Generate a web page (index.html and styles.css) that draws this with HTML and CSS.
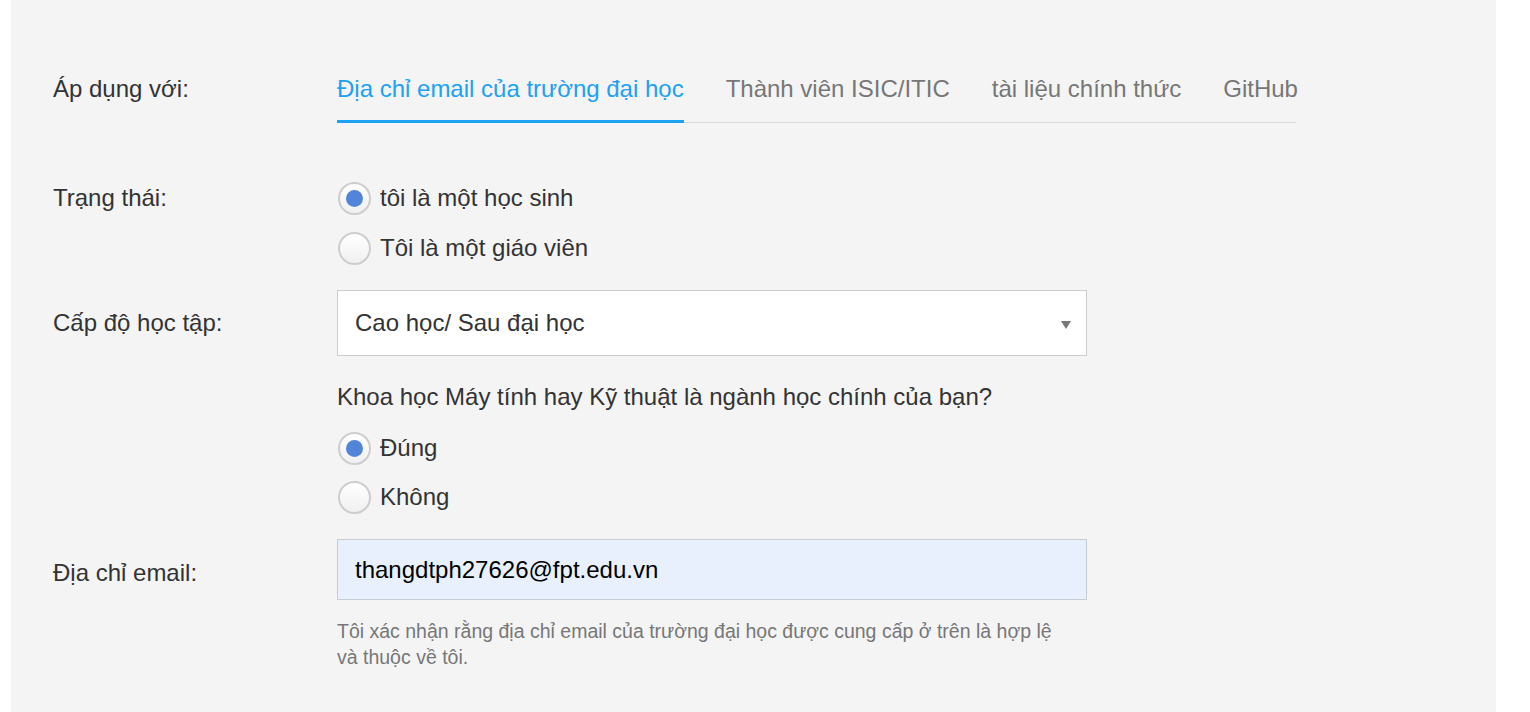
FILE: index.html
```html
<!DOCTYPE html>
<html lang="vi">
<head>
<meta charset="utf-8">
<title>Form</title>
<link rel="stylesheet" href="styles.css">
</head>
<body>
<div class="panel">
  <div class="row row-tabs">
    <div class="label">Áp dụng với:</div>
    <nav class="tabs">
      <span class="tab active">Địa chỉ email của trường đại học</span>
      <span class="tab">Thành viên ISIC/ITIC</span>
      <span class="tab">tài liệu chính thức</span>
      <span class="tab">GitHub</span>
    </nav>
  </div>

  <div class="row row-status">
    <div class="label label-radio">Trạng thái:</div>
    <div class="options">
      <div class="option"><span class="radio checked"></span><span>tôi là một học sinh</span></div>
      <div class="option"><span class="radio"></span><span>Tôi là một giáo viên</span></div>
    </div>
  </div>

  <div class="row row-select">
    <div class="label">Cấp độ học tập:</div>
    <div class="field">
      <div class="select"><span>Cao học/ Sau đại học</span><span class="arrow"></span></div>
    </div>
  </div>

  <div class="row row-question">
    <div class="label"></div>
    <div class="field">
      <div class="question">Khoa học Máy tính hay Kỹ thuật là ngành học chính của bạn?</div>
      <div class="options options-q">
        <div class="option"><span class="radio checked"></span><span>Đúng</span></div>
        <div class="option"><span class="radio"></span><span>Không</span></div>
      </div>
    </div>
  </div>

  <div class="row row-email">
    <div class="label label-email">Địa chỉ email:</div>
    <div class="field">
      <div class="input">thangdtph27626@fpt.edu.vn</div>
      <p class="help">Tôi xác nhận rằng địa chỉ email của trường đại học được cung cấp ở trên là hợp lệ và thuộc về tôi.</p>
    </div>
  </div>
</div>
</body>
</html>
```

FILE: styles.css
```css
* { box-sizing: border-box; }
html, body { margin: 0; padding: 0; background: #ffffff; }
body {
  font-family: "Liberation Sans", Arial, sans-serif;
  font-size: 24px;
  color: #333333;
  overflow: hidden;
}
.panel {
  margin-left: 11px;
  width: 1485px;
  min-height: 712px;
  background: #f4f4f4;
  padding: 75px 0 0 42px;
}
.row { display: flex; }
.label {
  width: 284px;
  flex-shrink: 0;
  line-height: 28px;
  color: #333333;
}
.tabs {
  display: flex;
  gap: 42px;
  width: 959px;
  border-bottom: 1px solid #d9d9d9;
}
.tab {
  line-height: 28px;
  padding-bottom: 17px;
  border-bottom: 3px solid transparent;
  margin-bottom: -1px;
  color: #777777;
  white-space: nowrap;
}
.tab.active {
  color: #1da1f2;
  border-bottom-color: #1da1f2;
}
.row-status { margin-top: 59px; }
.label-radio { line-height: 32px; }
.options { display: flex; flex-direction: column; gap: 18px; }
.options-q { gap: 17px; margin-top: 21px; }
.option {
  display: flex;
  align-items: center;
  height: 32px;
  line-height: 28px;
  color: #333333;
}
.radio {
  width: 33px;
  height: 33px;
  border-radius: 50%;
  border: 2px solid #cdcdcd;
  background: linear-gradient(#ffffff, #f0f0f0);
  margin: 0 9px 0 1px;
  display: flex;
  align-items: center;
  justify-content: center;
  flex-shrink: 0;
}
.radio.checked::after {
  content: "";
  width: 17px;
  height: 17px;
  border-radius: 50%;
  background: #5284d8;
}
.row-select { margin-top: 26px; align-items: center; }
.field { width: 750px; }
.select {
  height: 66px;
  border: 1px solid #cccccc;
  background: #ffffff;
  display: flex;
  align-items: center;
  justify-content: space-between;
  padding: 0 15px 0 17px;
  color: #333333;
}
.arrow {
  width: 0;
  height: 0;
  border-left: 5px solid transparent;
  border-right: 5px solid transparent;
  border-top: 8px solid #777777;
  margin-top: 4px;
}
.row-question { margin-top: 27px; }
.question { line-height: 28px; color: #333333; }
.row-email { margin-top: 26px; }
.label-email { margin-top: 20px; }
.input {
  height: 61px;
  border: 1px solid #c9ccd2;
  background: #e8f0fe;
  display: flex;
  align-items: center;
  padding: 0 17px;
  color: #000000;
}
.help {
  margin: 18px 0 0;
  max-width: 730px;
  font-size: 19.5px;
  line-height: 26px;
  color: #777777;
}
```
